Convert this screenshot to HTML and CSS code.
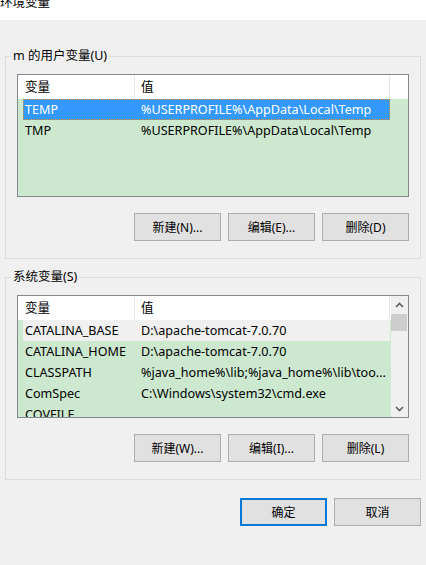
FILE: index.html
```html
<!DOCTYPE html>
<html lang="zh-CN">
<head>
  <meta charset="UTF-8">
  <meta name="viewport" content="width=device-width, initial-scale=1.0">
  <title>环境变量</title>
  <link rel="stylesheet" href="styles.css">
</head>
<body>

  <div class="titlebar"><span class="title">环境变量</span></div>

  <div class="dialog">
    <fieldset class="group">
      <legend>m 的用户变量(U)</legend>
      <div class="list">
        <div class="list-main">
          <div class="list-head">
            <div class="head-name">变量</div>
            <div class="head-value">值</div>
          </div>
          <div class="row selected">
            <div class="cell-name">TEMP</div>
            <div class="cell-value">%USERPROFILE%\AppData\Local\Temp</div>
          </div>
          <div class="row">
            <div class="cell-name">TMP</div>
            <div class="cell-value">%USERPROFILE%\AppData\Local\Temp</div>
          </div>
        </div>
      </div>
      <div class="btn-row">
        <button class="btn">新建(N)...</button>
        <button class="btn">编辑(E)...</button>
        <button class="btn">删除(D)</button>
      </div>
    </fieldset>

    <fieldset class="group group-system">
      <legend>系统变量(S)</legend>
      <div class="list">
        <div class="list-main">
          <div class="list-head">
            <div class="head-name">变量</div>
            <div class="head-value">值</div>
          </div>
          <div class="row inactive">
            <div class="cell-name">CATALINA_BASE</div>
            <div class="cell-value">D:\apache-tomcat-7.0.70</div>
          </div>
          <div class="row">
            <div class="cell-name">CATALINA_HOME</div>
            <div class="cell-value">D:\apache-tomcat-7.0.70</div>
          </div>
          <div class="row">
            <div class="cell-name">CLASSPATH</div>
            <div class="cell-value">%java_home%\lib;%java_home%\lib\too...</div>
          </div>
          <div class="row">
            <div class="cell-name">ComSpec</div>
            <div class="cell-value">C:\Windows\system32\cmd.exe</div>
          </div>
          <div class="row">
            <div class="cell-name">COVFILE</div>
            <div class="cell-value"></div>
          </div>
        </div>
        <div class="scrollbar">
          <div class="arrow">
            <svg width="9" height="6" viewBox="0 0 9 6"><path d="M1 5 L4.5 1.5 L8 5" fill="none" stroke="#606060" stroke-width="1.6"/></svg>
          </div>
          <div class="track"><div class="thumb"></div></div>
          <div class="arrow">
            <svg width="9" height="6" viewBox="0 0 9 6"><path d="M1 1 L4.5 4.5 L8 1" fill="none" stroke="#606060" stroke-width="1.6"/></svg>
          </div>
        </div>
      </div>
      <div class="btn-row">
        <button class="btn">新建(W)...</button>
        <button class="btn">编辑(I)...</button>
        <button class="btn">删除(L)</button>
      </div>
    </fieldset>

    <div class="footer">
      <button class="btn btn-default">确定</button>
      <button class="btn">取消</button>
    </div>
  </div>

</body>
</html>
```

FILE: styles.css
```css
body {
  margin: 0;
  width: 426px;
  height: 565px;
  background: #f0f0f0;
  font-family: "Noto Sans", "Noto Sans CJK SC", sans-serif;
  font-size: 12px;
  color: #000;
  overflow: hidden;
}

.titlebar {
  height: 20px;
  background: #fff;
  overflow: hidden;
}

.title {
  display: block;
  margin-top: -6px;
  line-height: 17px;
  font-size: 12.5px;
}

.dialog {
  padding: 28px 5px 0 5px;
}

.group {
  margin: 0;
  padding: 10px 11px 17px 11px;
  border: 1px solid #dcdcdc;
  min-width: 0;
}

.group legend {
  margin-left: -6px;
  padding: 0 2px;
  line-height: 16px;
  font-size: 12.5px;
}

.group-system {
  margin-top: 10px;
}

/* 列表 */
.list {
  display: flex;
  height: 121px;
  border: 1px solid #828790;
  background: #cce8cf;
  font-size: 12.6px;
  overflow: hidden;
}

.list-main {
  flex: 1;
  min-width: 0;
}

.list-head {
  display: flex;
  height: 24px;
  line-height: 24px;
  background: #fff;
}

.head-name {
  width: 109px;
  padding-left: 7px;
  border-right: 1px solid #e5e5e5;
}

.head-value {
  width: 248px;
  padding-left: 6px;
  border-right: 1px solid #e5e5e5;
}

.row {
  display: flex;
  width: 367px;
  height: 21px;
  line-height: 21px;
  margin-left: 5px;
  white-space: nowrap;
}

.cell-name {
  width: 114px;
  padding: 0 2px;
  overflow: hidden;
}

.cell-value {
  flex: 1;
  overflow: hidden;
}

.row.selected {
  background: #3399ff;
  color: #fff;
  outline: 1px dotted #e0903c;
  outline-offset: -1px;
}

.row.inactive {
  background: #f0f0f0;
}

/* 滚动条 */
.scrollbar {
  width: 17px;
  display: flex;
  flex-direction: column;
  background: #f0f0f0;
}

.arrow {
  height: 17px;
  display: flex;
  align-items: center;
  justify-content: center;
}

.track {
  flex: 1;
  padding-top: 1px;
}

.thumb {
  height: 17px;
  margin: 0 1px 0 0;
  background: #cdcdcd;
}

/* 按钮 */
.btn-row,
.footer {
  display: flex;
  justify-content: flex-end;
  gap: 7px;
}

.btn-row {
  margin-top: 16px;
}

.footer {
  margin-top: 18px;
}

.btn {
  width: 87px;
  height: 28px;
  padding: 0;
  background: #e1e1e1;
  border: 1px solid #adadad;
  font-family: inherit;
  font-size: 12px;
  color: #000;
}

.btn-default {
  border: 2px solid #0078d7;
}
```
